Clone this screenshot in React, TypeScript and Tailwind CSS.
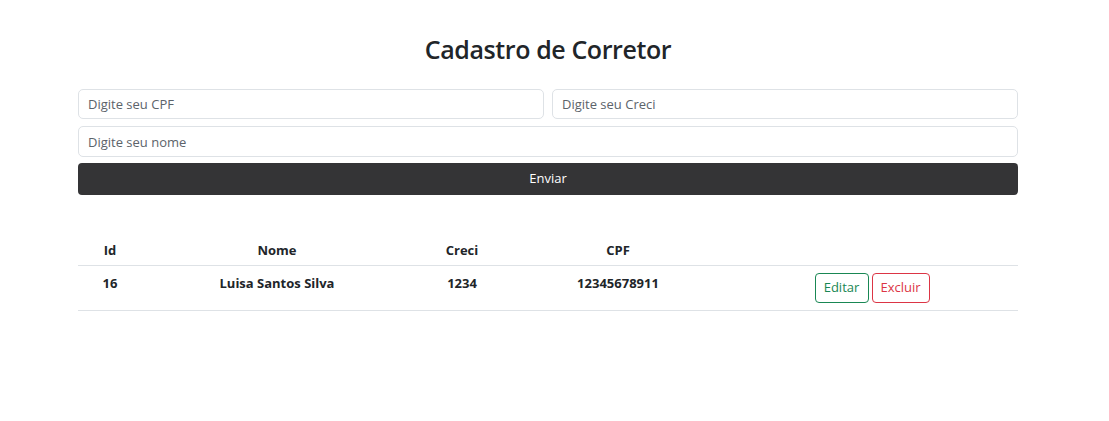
import React from "react";

const corretores = [
  { id: 16, nome: "Luisa Santos Silva", creci: "1234", cpf: "12345678911" },
];

const App = () => {
  return (
    <div
      className="min-h-screen bg-white text-[#212529]"
      style={{ fontFamily: '"Open Sans", "Noto Sans", sans-serif' }}
    >
      <main className="ml-[78px] w-[940px] pt-[33px]">
        <h1 className="mb-[24px] text-center text-[25px] font-semibold leading-[32px] tracking-[-0.4px]">
          Cadastro de Corretor
        </h1>

        {/* Formulario */}
        <form className="flex flex-col">
          <div className="grid grid-cols-2 gap-2">
            <input
              type="text"
              placeholder="Digite seu CPF"
              className="h-[30px] rounded-[5px] border border-[#dee2e6] px-[9px] text-[13px] placeholder:text-[#5c636a] outline-none"
            />
            <input
              type="text"
              placeholder="Digite seu Creci"
              className="h-[30px] rounded-[5px] border border-[#dee2e6] px-[9px] text-[13px] placeholder:text-[#5c636a] outline-none"
            />
          </div>
          <input
            type="text"
            placeholder="Digite seu nome"
            className="mt-[7px] h-[31px] rounded-[5px] border border-[#dee2e6] px-[9px] text-[13px] placeholder:text-[#5c636a] outline-none"
          />
          <button
            type="button"
            className="mt-[6px] h-[32px] rounded-[4px] bg-[#343436] text-[13px] text-white"
          >
            Enviar
          </button>
        </form>

        {/* Tabela */}
        <table className="mt-[39px] w-full table-fixed border-collapse text-[13px] font-bold">
          <colgroup>
            <col className="w-[64px]" />
            <col className="w-[270px]" />
            <col className="w-[100px]" />
            <col className="w-[212px]" />
            <col />
          </colgroup>
          <thead>
            <tr className="border-b border-[#dee2e6]">
              <th className="h-[31px] pb-[4px] align-bottom">Id</th>
              <th className="pb-[4px] align-bottom">Nome</th>
              <th className="pb-[4px] align-bottom">Creci</th>
              <th className="pb-[4px] align-bottom">CPF</th>
              <th></th>
            </tr>
          </thead>
          <tbody>
            {corretores.map((c) => (
              <tr key={c.id} className="border-b border-[#dee2e6]">
                <td className="pt-[8px] text-center align-top">{c.id}</td>
                <td className="pt-[8px] text-center align-top">{c.nome}</td>
                <td className="pt-[8px] text-center align-top">{c.creci}</td>
                <td className="pt-[8px] text-center align-top">{c.cpf}</td>
                <td className="py-[7px] text-center">
                  <div className="flex justify-center gap-[3px] pl-[2px]">
                    <button className="h-[30px] w-[54px] rounded-[4px] border border-[#198754] text-[13px] font-normal text-[#198754]">
                      Editar
                    </button>
                    <button className="h-[30px] w-[58px] rounded-[4px] border border-[#dc3545] text-[13px] font-normal text-[#dc3545]">
                      Excluir
                    </button>
                  </div>
                </td>
              </tr>
            ))}
          </tbody>
        </table>
      </main>
    </div>
  );
};

export default App;
